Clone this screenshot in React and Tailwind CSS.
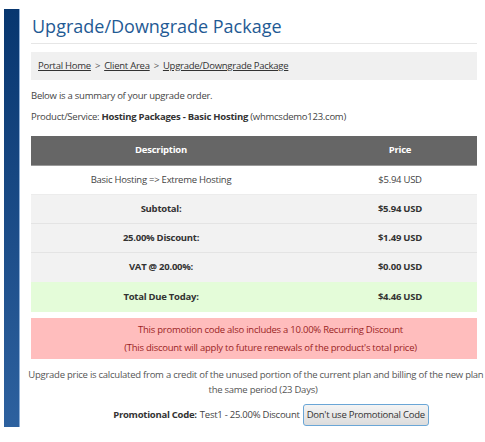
export default function App() {
  const font = { fontFamily: '"Open Sans", "Noto Sans", sans-serif' };
  const cell = "w-[260px] flex items-center justify-center";
  const pcell = "flex-1 flex items-center justify-center pl-[32px]";
  return (
    <div className="w-[485px] h-[442px] overflow-hidden bg-white flex" style={font}>
      <div className="ml-[4px] mt-[9px] w-[16px] h-[418px] bg-gradient-to-b from-[#07366f] to-[#2d619f] border-r border-[#8fb0d8] shrink-0" />
      <div className="flex flex-col pl-[11px] w-[460px] shrink-0 text-[9.5px] tracking-[-0.25px]">
        <h1 className="mt-[13px] ml-[1px] text-[18px] leading-[26px] text-[#1f5a94] tracking-[0px]">Upgrade/Downgrade Package</h1>
        <div className="mt-[4px] h-px w-[446px] bg-[#e6e6e6]" />
        <div className="mt-[8px] w-[446px] h-[28px] bg-[#f0f0f0] flex items-center pl-[7px] text-[#333]">
          <span className="underline">Portal Home</span>
          <span className="mx-[4px] text-[#555]">&gt;</span>
          <span className="underline">Client Area</span>
          <span className="mx-[4px] text-[#555]">&gt;</span>
          <span className="underline">Upgrade/Downgrade Package</span>
        </div>
        <p className="mt-[9px] leading-[14px] text-[#444]">Below is a summary of your upgrade order.</p>
        <p className="mt-[7px] leading-[14px] text-[#444]">
          Product/Service: <b className="text-[#333]">Hosting Packages - Basic Hosting</b> (whmcsdemo123.com)
        </p>
        <div className="mt-[12px] w-[446px] text-[#444]">
          <div className="flex h-[30px] bg-[#666666] border-b border-[#9a9a9a] text-white font-bold">
            <div className={cell}>Description</div>
            <div className={pcell}>Price</div>
          </div>
          <div className="flex h-[29px] bg-white border-b border-[#ececec]">
            <div className={cell}>Basic Hosting =&gt; Extreme Hosting</div>
            <div className={pcell}>$5.94 USD</div>
          </div>
          <div className="flex h-[29px] bg-[#f2f2f2] border-b border-[#e4e4e4] font-bold text-[#333]">
            <div className={cell}>Subtotal:</div>
            <div className={pcell}>$5.94 USD</div>
          </div>
          <div className="flex h-[29px] bg-[#f2f2f2] border-b border-[#e4e4e4] font-bold text-[#333]">
            <div className={cell}>25.00% Discount:</div>
            <div className={pcell}>$1.49 USD</div>
          </div>
          <div className="flex h-[29px] bg-[#f2f2f2] font-bold text-[#333]">
            <div className={cell}>VAT @ 20.00%:</div>
            <div className={pcell}>$0.00 USD</div>
          </div>
          <div className="flex h-[30px] bg-[#e4fcd9] font-bold text-[#333]">
            <div className={cell}>Total Due Today:</div>
            <div className={pcell}>$4.46 USD</div>
          </div>
        </div>
        <div className="mt-[6px] w-[446px] h-[41px] bg-[#ffbdbd] flex flex-col items-center justify-center pl-[33px] leading-[18px] text-[#9b1f1f]">
          <div>This promotion code also includes a 10.00% Recurring Discount</div>
          <div>(This discount will apply to future renewals of the product's total price)</div>
        </div>
        <div className="mt-[8px] w-[464px] flex flex-col items-center leading-[15px] text-[#555]">
          <div className="whitespace-nowrap">Upgrade price is calculated from a credit of the unused portion of the current plan and billing of the new plan for</div>
          <div>the same period (23 Days)</div>
        </div>
        <div className="mt-[7px] w-[480px] flex items-center justify-center text-[#444]">
          <b className="text-[#333]">Promotional Code:</b>
          <span className="ml-[3px]">Test1 - 25.00% Discount</span>
          <button className="ml-[3px] h-[22px] px-[3px] rounded-[3px] border border-[#6aa6d6] bg-gradient-to-b from-[#f4f4f4] to-[#dcdcdc] text-[9.5px] tracking-[-0.25px] text-[#333]" style={font}>Don't use Promotional Code</button>
        </div>
      </div>
    </div>
  );
}
